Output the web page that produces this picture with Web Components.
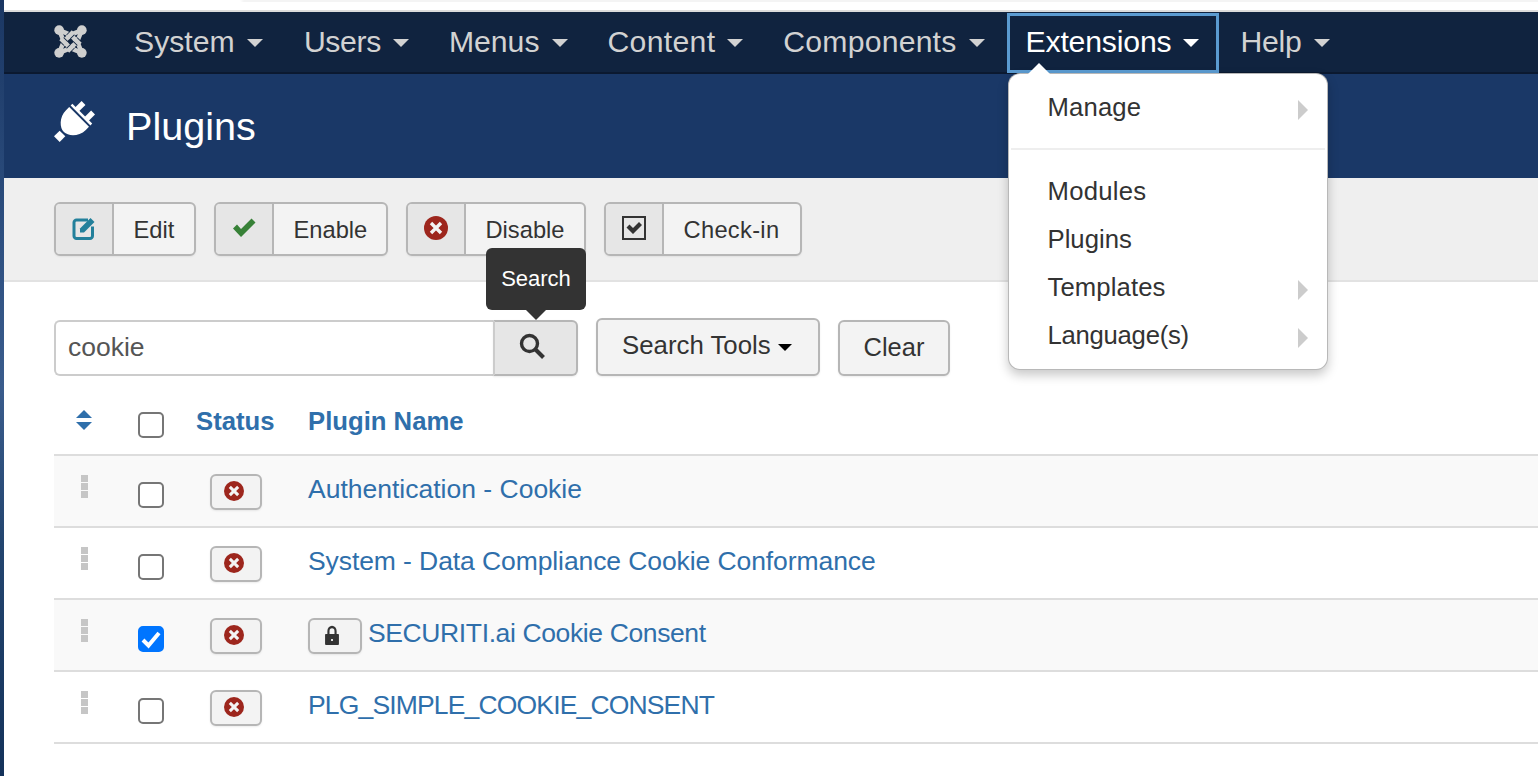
<!DOCTYPE html>
<html lang="en">
<head>
<meta charset="utf-8">
<title>Plugins</title>
<style>
  html, body { margin: 0; padding: 0; height: 100%; overflow: hidden; background: #fff; }
  body { font-family: "Liberation Sans", Arial, sans-serif; color: #333; }
</style>
</head>
<body>
<admin-shell>
  <top-nav>
    <nav-item style="margin-right:1.300px">System</nav-item>
    <nav-item style="letter-spacing:-.38px">Users</nav-item>
    <nav-item>Menus</nav-item>
    <nav-item style="letter-spacing:.3px">Content</nav-item>
    <nav-item style="letter-spacing:.2px">Components</nav-item>
    <nav-item open style="letter-spacing:-.17px">Extensions
      <ext-menu slot="menu" style="letter-spacing:0">
        <menu-row arrow style="letter-spacing:.15px">Manage</menu-row>
        <menu-rule></menu-rule>
        <menu-row style="letter-spacing:.25px">Modules</menu-row>
        <menu-row>Plugins</menu-row>
        <menu-row arrow style="letter-spacing:.1px">Templates</menu-row>
        <menu-row arrow style="letter-spacing:-.27px">Language(s)</menu-row>
      </ext-menu>
    </nav-item>
    <nav-item style="letter-spacing:-.25px;margin-left:1px">Help</nav-item>
  </top-nav>
  <title-bar>Plugins</title-bar>
  <tool-bar>
    <tool-btn icon="edit" style="width:142px">Edit</tool-btn>
    <tool-btn icon="check" style="width:174px">Enable</tool-btn>
    <tool-btn icon="cancel" style="width:180px">Disable</tool-btn>
    <tool-btn icon="checkin" style="width:198px;letter-spacing:.3px">Check-in</tool-btn>
  </tool-bar>
  <search-bar></search-bar>
  <plugin-table>
    <plugin-row shade>Authentication - Cookie</plugin-row>
    <plugin-row style="letter-spacing:-.09px">System - Data Compliance Cookie Conformance</plugin-row>
    <plugin-row shade checked locked style="letter-spacing:-.38px">SECURITI.ai Cookie Consent</plugin-row>
    <plugin-row style="letter-spacing:-.84px">PLG_SIMPLE_COOKIE_CONSENT</plugin-row>
  </plugin-table>
</admin-shell>

<script>
const ICONS = {
  edit: `<svg width="26" height="26" viewBox="0 0 26 26"><path d="M17 5H5.5A2.5 2.5 0 0 0 3 7.500V21a2.500 2.500 0 0 0 2.500 2.500H19a2.500 2.500 0 0 0 2.500-2.500V11.500" fill="none" stroke="#23809b" stroke-width="3"/><path d="M9 13.500 19.500 3l4 4L13 17.500H9z" fill="#23809b"/></svg>`,
  check: `<svg width="26" height="22" viewBox="0 0 26 22"><path d="M2 11.500 6 7.500 10 12 20.500 1.500 24.500 5.500 10 20z" fill="#378137"/></svg>`,
  cancel: `<svg width="24" height="24" viewBox="0 0 24 24"><circle cx="12" cy="12" r="12" fill="#9d261d"/><path d="M7 7l10 10M17 7 7 17" stroke="#f3f3f3" stroke-width="3.400"/></svg>`,
  checkin: `<svg width="26" height="26" viewBox="0 0 26 26"><rect x="2" y="2" width="22" height="22" fill="none" stroke="#333" stroke-width="2"/><path d="M5.500 12.500 8.500 9.500 12 13 18 7l3 3-9 9z" fill="#333"/></svg>`
};

function define(name, html, init) {
  const tpl = document.createElement('template');
  tpl.innerHTML = html;
  customElements.define(name, class extends HTMLElement {
    constructor() {
      super();
      this.attachShadow({ mode: 'open' }).appendChild(tpl.content.cloneNode(true));
    }
    connectedCallback() { if (init) init(this, this.shadowRoot); }
  });
}

define('admin-shell', `
  <style>
    :host { display: flex; width: 1538px; height: 776px; overflow: hidden; }
    .strip { flex: 0 0 4px; background: linear-gradient(#1b3763 0, #2d4f80 30%, #3a5c8c 50%, #23456f 70%, #14325a 100%); }
    main { flex: 1; min-width: 0; display: flex; flex-direction: column; }
    .chrome { height: 10px; box-sizing: border-box; background: linear-gradient(90deg, #fff 236px, #f4f4f4 240px) top / 100% 2px no-repeat, #fff; }
    .edge { height: 2px; background: #dcdcdc; }
  </style>
  <div class="strip"></div>
  <main><div class="chrome"></div><div class="edge"></div><slot></slot></main>
`);

const LOGO_BANDS = [
  'M5 5 9.500 16 16 22.500 27 27',
  'M5 5 16 9.500 22.500 16 27 27',
  'M27 5 16 9.500 9.500 16 5 27',
  'M27 5 22.500 16 16 22.500 5 27'
];
const LOGO_OVER = [[7.5,14,11.5,18],[14,11.5,18,7.5],[20.5,14,24.5,18],[14,24.5,18,20.5]];
const logoSvg = `<svg width="33" height="33" viewBox="0 0 32 32" fill="none" stroke-linejoin="round">
  ${LOGO_BANDS.map(d => `<path d="${d}" stroke="#cfcfcf" stroke-width="4.400"/>`).join('')}
  ${[[5,5],[27,5],[5,27],[27,27]].map(c => `<circle cx="${c[0]}" cy="${c[1]}" r="4.700" fill="#cfcfcf"/>`).join('')}
  ${LOGO_OVER.map(l => `<line x1="${l[0]}" y1="${l[1]}" x2="${l[2]}" y2="${l[3]}" stroke="#10233f" stroke-width="6"/><line x1="${l[0]-.8}" y1="${l[1]+(l[1]<l[3]?-.8:.8)}" x2="${l[2]+.8}" y2="${l[3]+(l[1]<l[3]?.8:-.8)}" stroke="#cfcfcf" stroke-width="4.400"/>`).join('')}
</svg>`;

define('top-nav', `
  <style>
    :host { display: flex; align-items: stretch; box-sizing: border-box; height: 62px; background: #10233f; border-bottom: 2px solid #0b1930; padding-left: 50px; position: relative; z-index: 5; }
    .logo { flex: 0 0 60px; display: flex; align-items: center; }
    svg { display: block; margin-top: -2px; }
  </style>
  <div class="logo">${logoSvg}</div>
  <slot></slot>
`);

define('nav-item', `
  <style>
    :host { display: block; position: relative; box-sizing: border-box; height: 60px; padding: 0 20px; color: #d2d2d2; font-size: 30.200px; }
    .in { display: flex; align-items: center; height: 59px; white-space: nowrap; }
    i { display: block; width: 0; height: 0; margin-left: 12px; margin-top: 3px; border: 8px solid transparent; border-top-color: currentColor; border-bottom: 0; }
    :host([open]) { color: #fff; padding: 0 20px 0 19px; margin-left: 2px; height: 60px; outline: 3px solid #5b9bd1; outline-offset: -3px; margin-top: 1px; margin-bottom: -1px; }
    :host([open]) .in { height: 57px; }
  </style>
  <div class="in"><slot></slot><i></i></div>
  <slot name="menu"></slot>
`);

define('ext-menu', `
  <style>
    :host { display: block; position: absolute; left: 1px; top: 60px; width: 320px; height: 297px; box-sizing: border-box; padding: 9px 0 0; background: #fff; border: 1px solid rgba(0,0,0,.28); border-radius: 12px; box-shadow: 0 5px 11px rgba(0,0,0,.22); color: #333; font-size: 25.700px; }
    :host::before { content: ""; position: absolute; left: 18px; top: -11px; border: 12px solid transparent; border-bottom-color: #fff; border-top: 0; }
  </style>
  <slot></slot>
`);

define('menu-row', `
  <style>
    :host { display: flex; align-items: center; justify-content: space-between; height: 48px; padding: 0 19px 0 39px; }
    span { display: block; margin-top: 1px; line-height: 30px; position: relative; top: -1px; }
    i { display: none; width: 0; height: 0; margin-top: 5px; border: 10px solid transparent; border-left: 10px solid #ccc; border-right: 0; }
    :host([arrow]) i { display: block; }
  </style>
  <span><slot></slot></span><i></i>
`);

define('menu-rule', `
  <style>:host { display: block; height: 2px; margin: 17px 2px 17px; background: #eee; }</style>
`);

define('title-bar', `
  <style>
    :host { display: flex; align-items: center; height: 104px; box-sizing: border-box; padding: 0 0 0 50px; background: #1a3867; color: #fff; font-size: 39.600px; }
    .ic { flex: 0 0 72px; display: flex; align-items: center; }
    span { position: relative; top: 0; }
    svg { display: block; margin-top: -8px; overflow: visible; }
  </style>
  <div class="ic"><svg width="40" height="40" viewBox="0 0 40 40">
    <g transform="translate(20.500 19.500) rotate(45)" fill="#fff">
      <rect x="-9.500" y="-19.500" width="5.500" height="9.500"/>
      <rect x="4" y="-19.500" width="5.500" height="9.500"/>
      <rect x="-14" y="-11" width="28" height="2.500"/>
      <path d="M-14-6.500H14V-2C14 8 6 15 0 15-6 15-14 8-14-2Z"/>
      <rect x="-4" y="17" width="8" height="8"/>
    </g>
  </svg></div>
  <span><slot></slot></span>
`);

define('tool-bar', `
  <style>
    :host { display: flex; gap: 18px; height: 104px; box-sizing: border-box; padding: 24px 0 0 50px; background: #efefef; border-bottom: 2px solid #e2e2e2; }
  </style>
  <slot></slot>
`);

define('tool-btn', `
  <style>
    :host { display: flex; height: 54px; box-sizing: border-box; border: 2px solid #b6b6b6; border-radius: 6px; background: #f3f3f3; font-size: 23.700px; overflow: hidden; box-shadow: 0 1px 2px rgba(0,0,0,.06); }
    .ic { flex: 0 0 58px; box-sizing: border-box; border-right: 2px solid #b6b6b6; background: #e6e6e6; display: flex; align-items: center; justify-content: center; padding-bottom: 3px; }
    .tx { padding: 0 0 0 19.500px; display: flex; align-items: center; position: relative; top: 1px; white-space: nowrap; }
  </style>
  <div class="ic"></div><div class="tx"><slot></slot></div>
`, (el, root) => { root.querySelector('.ic').innerHTML = ICONS[el.getAttribute('icon')] || ''; });

define('search-bar', `
  <style>
    :host { display: flex; align-items: flex-end; padding: 36px 0 0 50px; font-size: 25.500px; color: #333; }
    .box { width: 439px; height: 56px; box-sizing: border-box; border: 2px solid #ccc; border-right: 0; border-radius: 6px 0 0 6px; display: flex; align-items: center; padding: 0 0 2px 12px; color: #555; font-size: 26.500px; }
    .go { position: relative; width: 85px; height: 56px; box-sizing: border-box; border: 2px solid #b6b6b6; border-left-color: #ccc; border-radius: 0 6px 6px 0; background: #e6e6e6; display: flex; align-items: center; justify-content: center; box-shadow: 0 1px 2px rgba(0,0,0,.08); }
    .go svg { display: block; margin: -5px 8px 0 0; }
    .tip { position: absolute; left: -9px; top: -74px; width: 100px; height: 62px; background: #333; color: #fff; border-radius: 6px; font-size: 22px; display: flex; align-items: center; justify-content: center; }
    .tip::after { content: ""; position: absolute; left: 40px; top: 62px; border: 10px solid transparent; border-top-color: #333; border-bottom: 0; }
    .btn { box-sizing: border-box; border: 2px solid #b6b6b6; border-radius: 6px; background: #f3f3f3; display: flex; align-items: center; box-shadow: 0 1px 2px rgba(0,0,0,.08); }
    .tools { width: 224px; height: 58px; margin-left: 18px; padding: 0 0 4px 24px; font-size: 25.800px; }
    .tools i { display: block; margin: 4px 0 0 7px; width: 0; height: 0; border: 7.500px solid transparent; border-top-color: #000; border-bottom: 0; }
    .clear { width: 112px; height: 56px; margin-left: 18px; padding-bottom: 2px; justify-content: center; }
  </style>
  <div class="box">cookie</div>
  <div class="go">
    <div class="tip">Search</div>
    <svg width="28" height="28" viewBox="0 0 28 28"><circle cx="11.500" cy="11.500" r="8" fill="none" stroke="#333" stroke-width="3.400"/><path d="M17.500 17.500 25.500 25.500" stroke="#333" stroke-width="4"/></svg>
  </div>
  <div class="btn tools">Search Tools<i></i></div>
  <div class="btn clear">Clear</div>
`);

define('plugin-table', `
  <style>
    :host { display: block; margin-left: 50px; }
    .head { display: grid; grid-template-columns: 60px 76px 118px 1fr; height: 80px; box-sizing: border-box; border-bottom: 2px solid #ddd; font-size: 25.700px; font-weight: 700; color: #2f6fab; }
    .sort { display: flex; justify-content: center; padding-top: 34px; }
    .sort svg { display: block; }
    .cb { padding: 36px 0 0 24px; }
    .st { padding: 30px 0 0 6px; line-height: 30px; }
    .nm { padding: 30px 0 0 0; line-height: 30px; }
  </style>
  <div class="head">
    <div class="sort"><svg width="18" height="20" viewBox="0 0 18 20"><path d="M9 0 17 8H1zM9 20 1 12h16z" fill="#2f6fab"/></svg></div>
    <div class="cb"><check-box></check-box></div>
    <div class="st">Status</div>
    <div class="nm">Plugin Name</div>
  </div>
  <slot></slot>
`);

define('check-box', `
  <style>
    :host { display: block; width: 26px; height: 26px; box-sizing: border-box; border: 2px solid #767676; border-radius: 5px; background: #fff; }
    :host([checked]) { background: #0075ff; border-color: #0075ff; }
    svg { display: none; margin: -1px; }
    :host([checked]) svg { display: block; }
  </style>
  <svg width="24" height="24" viewBox="0 0 24 24"><path d="M4 13l5.500 5.500L20 6" fill="none" stroke="#fff" stroke-width="4"/></svg>
`);

define('plugin-row', `
  <style>
    :host { display: grid; grid-template-columns: 60px 76px 118px 1fr; height: 72px; box-sizing: border-box; border-bottom: 2px solid #ddd; align-items: start; font-size: 26.500px; color: #2f6fab; }
    :host([shade]) { background: #f9f9f9; }
    .drag { margin: 19px 0 0 27px; width: 7px; display: grid; gap: 1px; }
    .drag b { display: block; height: 7px; background: #c6c6c6; }
    .cb { padding: 26px 0 0 24px; }
    .btn { box-sizing: border-box; height: 36px; border: 2px solid #b6b6b6; border-radius: 6px; background: #f3f3f3; display: flex; align-items: center; justify-content: center; box-shadow: 0 1px 2px rgba(0,0,0,.08); }
    .st { margin: 18px 0 0 20px; width: 52px; padding-right: 4px; padding-bottom: 2px; }
    .nm { display: flex; align-items: flex-start; margin-top: 15px; line-height: 36px; white-space: nowrap; }
    .lock { display: none; width: 54px; margin: 3px 6px 0 0; padding: 0 6px 2px 0; }
    :host([locked]) .lock { display: flex; }
  </style>
  <div class="drag"><b></b><b></b><b></b></div>
  <div class="cb"><check-box></check-box></div>
  <div class="btn st"><svg width="20" height="20" viewBox="0 0 24 24"><circle cx="12" cy="12" r="12" fill="#9d261d"/><path d="M7 7l10 10M17 7 7 17" stroke="#f3f3f3" stroke-width="3.600"/></svg></div>
  <div class="nm"><div class="btn lock"><svg width="16" height="20" viewBox="0 0 18 20" preserveAspectRatio="none"><path d="M5 9V6a4 4 0 0 1 8 0v3" fill="none" stroke="#333" stroke-width="2.400"/><path d="M2 9h14a.8.8 0 0 1 .8.8V19a1 1 0 0 1-1 1H2.200a1 1 0 0 1-1-1V9.800A.8.8 0 0 1 2 9z" fill="#333"/><rect x="8" y="14" width="2" height="2" fill="#f3f3f3"/></svg></div><slot></slot></div>
`, (el, root) => { if (el.hasAttribute('checked')) root.querySelector('check-box').setAttribute('checked', ''); });
</script>
</body>
</html>
